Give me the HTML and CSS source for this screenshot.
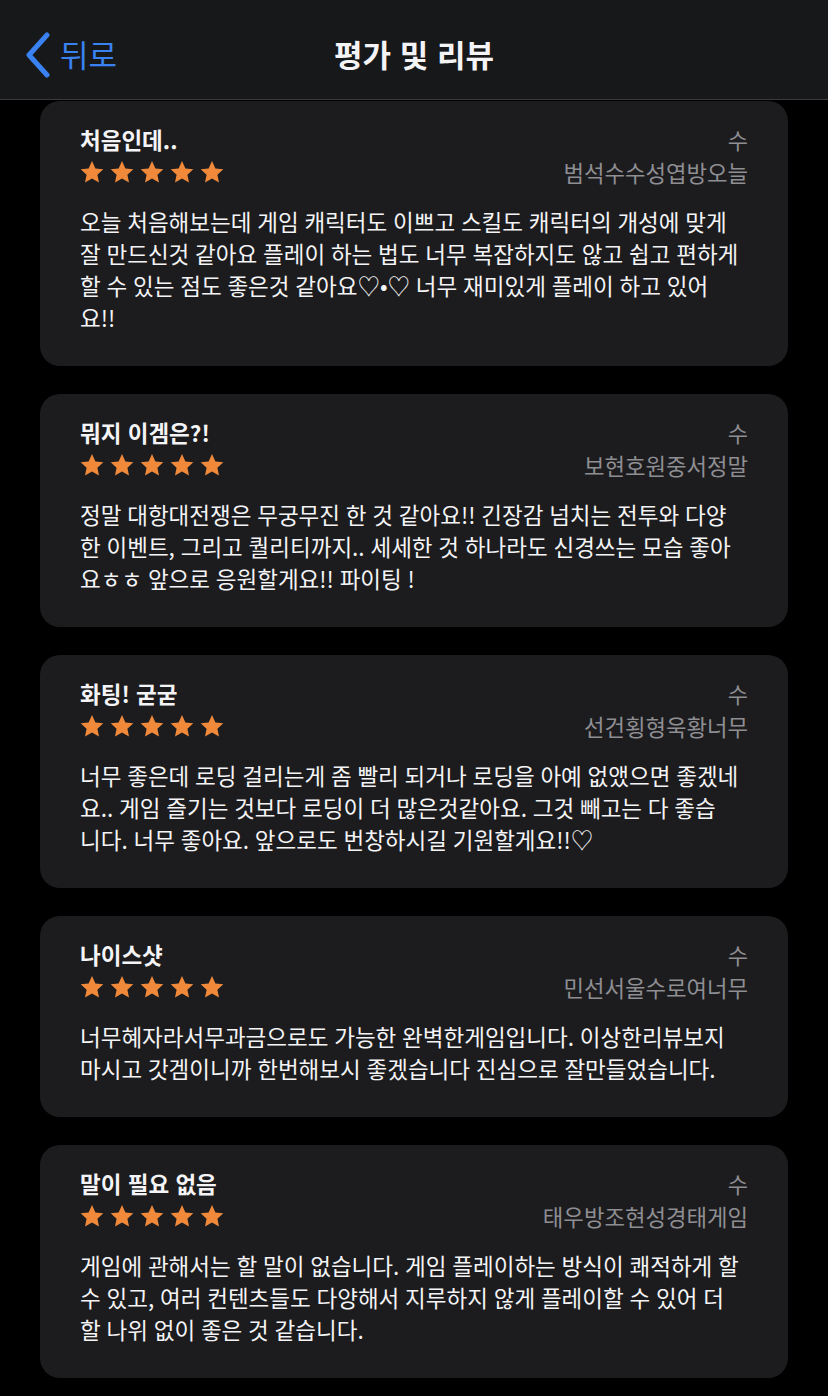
FILE: index.html
```html
<!doctype html>
<html lang="ko">
  <head>
    <meta charset="UTF-8" />
    <meta name="viewport" content="width=device-width, initial-scale=1.0" />
    <title>평가 및 리뷰</title>
    <link rel="stylesheet" href="styles.css">
  </head>
  <body>
    <header class="nav">
      <a class="back" href="#">
        <svg class="chevron" viewBox="0 0 28 46" width="28" height="46" aria-hidden="true">
          <path d="M23 3 L5 23 L23 43" />
        </svg>
        <span>뒤로</span>
      </a>
      <h1 class="nav-title">평가 및 리뷰</h1>
    </header>

    <main class="reviews">
      <!-- Review cards (line breaks follow the app's wrapping) -->
      <article class="review">
        <div class="review-head">
          <h2 class="review-title">처음인데..</h2>
          <span class="review-date">수</span>
        </div>
        <div class="review-meta">
          <span class="stars" aria-label="별 5개"></span>
          <span class="review-author">범석수수성엽방오늘</span>
        </div>
        <p class="review-body">오늘 처음해보는데 게임 캐릭터도 이쁘고 스킬도 캐릭터의 개성에 맞게<br>잘 만드신것 같아요 플레이 하는 법도 너무 복잡하지도 않고 쉽고 편하게<br>할 수 있는 점도 좋은것 같아요♡•♡ 너무 재미있게 플레이 하고 있어<br>요!!</p>
      </article>

      <article class="review">
        <div class="review-head">
          <h2 class="review-title">뭐지 이겜은?!</h2>
          <span class="review-date">수</span>
        </div>
        <div class="review-meta">
          <span class="stars" aria-label="별 5개"></span>
          <span class="review-author">보현호원중서정말</span>
        </div>
        <p class="review-body">정말 대항대전쟁은 무궁무진 한 것 같아요!! 긴장감 넘치는 전투와 다양<br>한 이벤트, 그리고 퀄리티까지.. 세세한 것 하나라도 신경쓰는 모습 좋아<br>요ㅎㅎ 앞으로 응원할게요!! 파이팅 !</p>
      </article>

      <article class="review">
        <div class="review-head">
          <h2 class="review-title">화팅! 굳굳</h2>
          <span class="review-date">수</span>
        </div>
        <div class="review-meta">
          <span class="stars" aria-label="별 5개"></span>
          <span class="review-author">선건횡형욱황너무</span>
        </div>
        <p class="review-body">너무 좋은데 로딩 걸리는게 좀 빨리 되거나 로딩을 아예 없앴으면 좋겠네<br>요.. 게임 즐기는 것보다 로딩이 더 많은것같아요. 그것 빼고는 다 좋습<br>니다. 너무 좋아요. 앞으로도 번창하시길 기원할게요!!♡</p>
      </article>

      <article class="review">
        <div class="review-head">
          <h2 class="review-title">나이스샷</h2>
          <span class="review-date">수</span>
        </div>
        <div class="review-meta">
          <span class="stars" aria-label="별 5개"></span>
          <span class="review-author">민선서울수로여너무</span>
        </div>
        <p class="review-body">너무혜자라서무과금으로도 가능한 완벽한게임입니다. 이상한리뷰보지<br>마시고 갓겜이니까 한번해보시 좋겠습니다 진심으로 잘만들었습니다.</p>
      </article>

      <article class="review">
        <div class="review-head">
          <h2 class="review-title">말이 필요 없음</h2>
          <span class="review-date">수</span>
        </div>
        <div class="review-meta">
          <span class="stars" aria-label="별 5개"></span>
          <span class="review-author">태우방조현성경태게임</span>
        </div>
        <p class="review-body">게임에 관해서는 할 말이 없습니다. 게임 플레이하는 방식이 쾌적하게 할<br>수 있고, 여러 컨텐츠들도 다양해서 지루하지 않게 플레이할 수 있어 더<br>할 나위 없이 좋은 것 같습니다.</p>
      </article>
    </main>
  </body>
</html>
```

FILE: styles.css
```css
:root {
  --bg-color: #000;
  --nav-bg: #17181a;
  --nav-border: #3a3a3c;
  --card-bg: #1c1c1e;
  --text-color: #f4f4f6;
  --muted-color: #8e8e93;
  --link-color: #3a82f2;
  --star-color: #f0893a;
}

body {
  margin: 0;
  background: var(--bg-color);
  color: var(--text-color);
  font-family: "Noto Sans CJK KR", "Noto Sans", sans-serif;
}

/* Navigation bar */
.nav {
  position: relative;
  height: 99px;
  background: var(--nav-bg);
  border-bottom: 1px solid var(--nav-border);
  display: flex;
  align-items: center;
  justify-content: center;
}

.back {
  position: absolute;
  left: 24px;
  top: 32px;
  display: flex;
  align-items: center;
  gap: 8px;
  color: var(--link-color);
  text-decoration: none;
  font-size: 31px;
  line-height: 46px;
}

.back span {
  margin-top: -2px;
}

.chevron path {
  fill: none;
  stroke: var(--link-color);
  stroke-width: 5;
  stroke-linecap: round;
  stroke-linejoin: round;
}

.nav-title {
  margin: 0;
  font-size: 31px;
  font-weight: 700;
  line-height: 40px;
  margin-top: 8px;
}

/* Review list */
.reviews {
  display: flex;
  flex-direction: column;
  gap: 28px;
  padding: 1px 40px 28px;
}

.review {
  background: var(--card-bg);
  border-radius: 20px;
  padding: 24px 40px 33px;
}

.review-head {
  display: flex;
  justify-content: space-between;
  align-items: center;
  height: 28px;
}

.review-title {
  margin: 0;
  font-size: 22.5px;
  font-weight: 700;
  line-height: 28px;
}

.review-date {
  color: var(--muted-color);
  font-size: 22px;
  line-height: 28px;
}

.review-meta {
  display: flex;
  justify-content: space-between;
  align-items: center;
  height: 30px;
  margin-top: 4px;
}

.stars {
  width: 145px;
  height: 25px;
  background-image: url("data:image/svg+xml,%3Csvg xmlns='http://www.w3.org/2000/svg' viewBox='0 0 30 24'%3E%3Cpath fill='%23f0893a' d='M12 0.6l3.4 7.3 7.9.9-5.9 5.4 1.6 7.9L12 18.1l-7 4 1.6-7.9L.7 8.8l7.9-.9z'/%3E%3C/svg%3E");
  background-size: 30px 25px;
  background-repeat: repeat-x;
}

.review-author {
  color: var(--muted-color);
  font-size: 22.3px;
  line-height: 30px;
}

.review-body {
  margin: 18px 0 0;
  font-size: 22.5px;
  line-height: 32px;
  word-spacing: -0.5px;
}
```
